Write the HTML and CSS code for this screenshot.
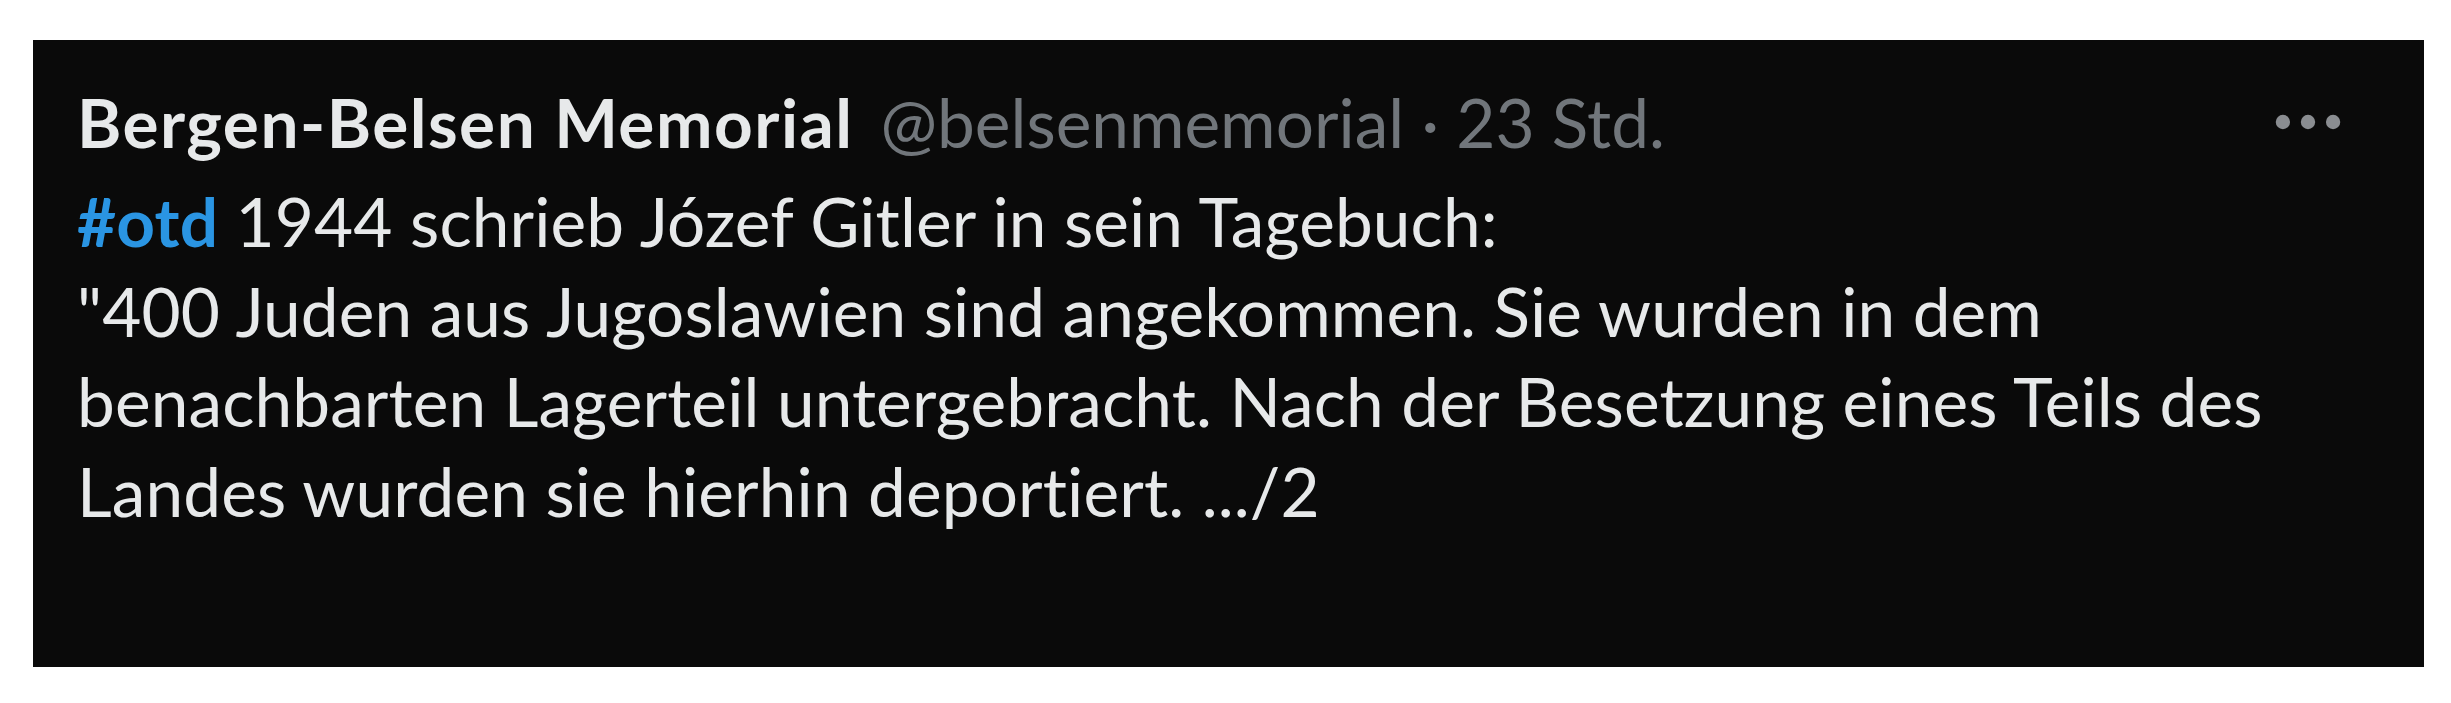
FILE: index.html
```html
<!DOCTYPE html>
<html lang="de">
<head>
<meta charset="utf-8">
<title>Bergen-Belsen Memorial</title>
<link rel="stylesheet" href="styles.css">
</head>
<body>
<article class="tweet">
  <header class="tweet-head">
    <span class="tweet-name">Bergen-Belsen Memorial</span>
    <span class="tweet-meta">@belsenmemorial · 23 Std.</span>
    <button class="tweet-more" aria-label="Mehr">
      <svg viewBox="0 0 24 24" class="more-icon" aria-hidden="true">
        <circle cx="5" cy="12" r="2"></circle>
        <circle cx="12" cy="12" r="2"></circle>
        <circle cx="19" cy="12" r="2"></circle>
      </svg>
    </button>
  </header>
  <p class="tweet-text"><span class="hashtag">#otd</span> 1944 schrieb Józef Gitler in sein Tagebuch:<br>"400 Juden aus Jugoslawien sind angekommen. Sie wurden in dem benachbarten Lagerteil untergebracht. Nach der Besetzung eines Teils des Landes wurden sie hierhin deportiert. .../2</p>
</article>
</body>
</html>
```
FILE: styles.css
```css
html, body {
  background: #ffffff;
}

body {
  margin: 0;
  padding: 40px 27px 36px 33px;
  font-family: Lato, "Open Sans", sans-serif;
}

.tweet {
  box-sizing: border-box;
  width: 2391px;
  height: 627px;
  background: #0a0a0a;
  padding: 37px 73px 0 44px;
  color: #e7e9ea;
}

.tweet-head {
  display: flex;
  align-items: center;
  height: 90px;
}

.tweet-name {
  font-weight: 700;
  font-size: 67.5px;
  line-height: 90px;
  letter-spacing: 1.5px;
  color: #e7e9ea;
  white-space: nowrap;
}

.tweet-meta {
  margin-left: 27px;
  font-weight: 400;
  font-size: 67.5px;
  line-height: 90px;
  color: #71767b;
  white-space: nowrap;
}

.tweet-more {
  margin-left: auto;
  width: 86px;
  height: 86px;
  padding: 0;
  border: 0;
  background: transparent;
  display: flex;
  align-items: center;
  justify-content: center;
}

.more-icon {
  width: 86px;
  height: 86px;
  fill: #8a8d91;
}

.tweet-text {
  margin: 9px 0 0 0;
  font-size: 67.5px;
  line-height: 90px;
  letter-spacing: 0.12px;
  color: #e7e9ea;
}

.hashtag {
  color: #2a95e3;
  font-weight: 700;
}
```
